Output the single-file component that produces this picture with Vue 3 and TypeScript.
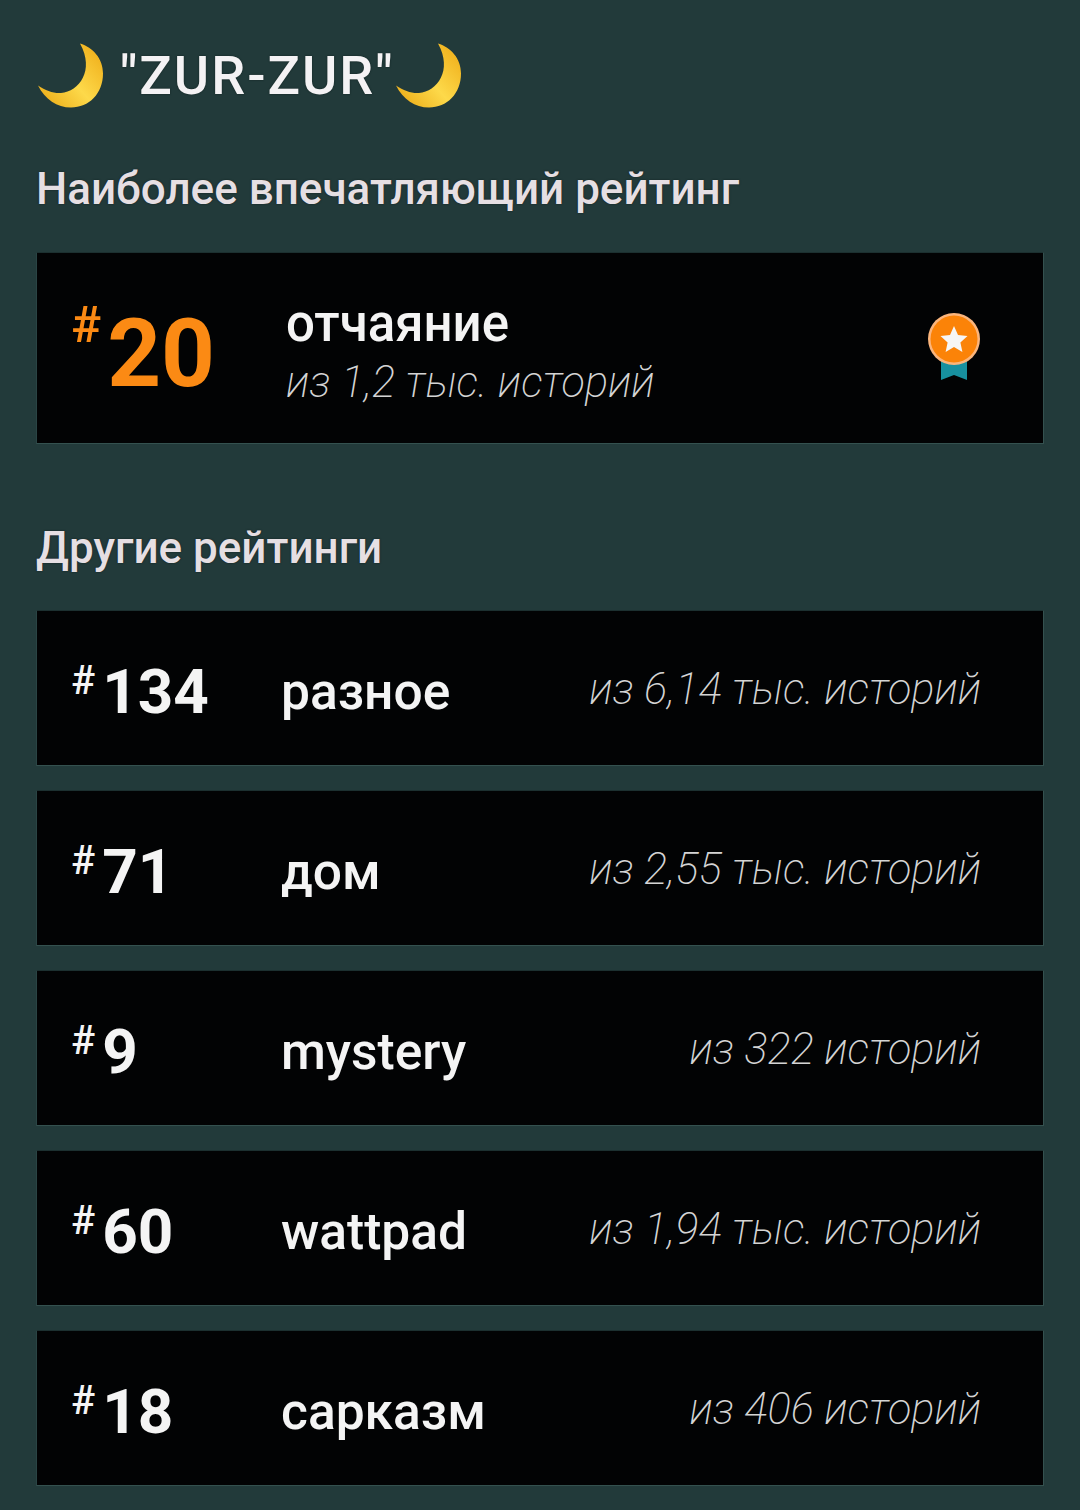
<template>
  <div class="page">
    <h1 class="title">
      <svg class="moon" viewBox="0 0 66 65"><use href="#moon-shape" /></svg>
      <span class="title-text">"ZUR-ZUR"</span>
      <svg class="moon moon-right" viewBox="0 0 66 65"><use href="#moon-shape" /></svg>
    </h1>

    <svg class="defs" width="0" height="0">
      <defs>
        <linearGradient id="moon-fill" x1="0.1" y1="0.9" x2="0.9" y2="0.2">
          <stop offset="0" stop-color="#eeb01c" />
          <stop offset="0.5" stop-color="#fdd94a" />
          <stop offset="1" stop-color="#f2b622" />
        </linearGradient>
        <path id="moon-shape" fill="url(#moon-fill)" d="M42 0 C55 4 65 15 65 30 C65 50 51 64 33 64 C19 64 7 56 0 42 C8 47 15 50 23 49.5 C41 48 57 27 42 0 Z" />
      </defs>
    </svg>

    <h2 class="heading">Наиболее впечатляющий рейтинг</h2>
    <div class="card card-top">
      <div class="rank rank-top"><span class="hash">#</span><span class="num">20</span></div>
      <div class="top-info">
        <div class="name">отчаяние</div>
        <div class="count">из 1,2 тыс. историй</div>
      </div>
      <svg class="medal" viewBox="0 0 54 68">
        <path d="M14 44 H40 V67 L27 62 L14 67 Z" fill="#17909f" />
        <circle cx="27" cy="26" r="26" fill="#fbb57c" />
        <circle cx="27" cy="26" r="23.5" fill="#fb8308" />
        <path d="M27 13 L31 22 L40.5 23 L33.4 29.5 L35.4 39 L27 34 L18.6 39 L20.6 29.5 L13.5 23 L23 22 Z" fill="#f6f6f6" />
      </svg>
    </div>

    <h2 class="heading heading-other">Другие рейтинги</h2>
    <div class="list">
      <div v-for="item in rankings" :key="item.name" class="card card-row">
        <div class="rank"><span class="hash">#</span><span class="num">{{ item.rank }}</span></div>
        <div class="name">{{ item.name }}</div>
        <div class="count">{{ item.count }}</div>
      </div>
    </div>
  </div>
</template>

<script setup lang="ts">
const rankings = [
  { rank: 134, name: "разное", count: "из 6,14 тыс. историй" },
  { rank: 71, name: "дом", count: "из 2,55 тыс. историй" },
  { rank: 9, name: "mystery", count: "из 322 историй" },
  { rank: 60, name: "wattpad", count: "из 1,94 тыс. историй" },
  { rank: 18, name: "сарказм", count: "из 406 историй" },
];
</script>

<style>
html,
body {
  background: #223a3a;
}
</style>

<style scoped>
.page {
  height: 1510px;
  box-sizing: border-box;
  padding: 41px 36px 0;
  background: #223a3a;
  font-family: Roboto, "Liberation Sans", sans-serif;
  overflow: hidden;
}

.title {
  display: flex;
  align-items: center;
  height: 68px;
  margin: 0;
  padding-left: 2px;
  font-size: 54px;
  font-weight: 500;
  letter-spacing: 2px;
  color: #f4f2f4;
  text-shadow: 0 0 2px #10201f;
}

.title-text {
  margin-left: 16px;
}

.moon {
  width: 66px;
  height: 66px;
  margin-top: 2px;
  flex-shrink: 0;
}

.moon-right {
  margin-left: 1px;
}

.defs {
  position: absolute;
}

.heading {
  margin: 54px 0 0;
  height: 52px;
  line-height: 52px;
  font-size: 44px;
  font-weight: 500;
  color: #e6dfe3;
  text-shadow: 0 0 2px #10201f;
}

.heading-other {
  margin-top: 78px;
}

.card {
  display: flex;
  align-items: center;
  box-sizing: border-box;
  width: 1008px;
  background: #020304;
  border: 1px solid #34514f;
  border-top-color: #1c3030;
  border-left-color: #2a4444;
  color: #f4f4f4;
}

.card-top {
  height: 192px;
  margin-top: 37px;
  padding: 0 62px 0 34px;
}

.card-row {
  height: 156px;
  padding: 0 62px 0 34px;
}

.list {
  display: flex;
  flex-direction: column;
  gap: 24px;
  margin-top: 36px;
}

.rank {
  display: flex;
  align-items: flex-start;
  width: 210px;
  flex-shrink: 0;
  font-weight: 700;
}

.hash {
  font-size: 40px;
  line-height: 40px;
  font-weight: 500;
  margin-top: 10px;
  margin-right: 7px;
}

.num {
  font-size: 62px;
  line-height: 66px;
  font-weight: 700;
  margin-top: 8px;
}

.rank-top {
  color: #fb8a14;
  width: 215px;
}

.rank-top .hash {
  font-size: 50px;
  line-height: 50px;
  margin-top: 4px;
  margin-right: 6px;
}

.rank-top .num {
  font-size: 94px;
  line-height: 92px;
  margin-top: 12px;
}

.name {
  font-size: 51.5px;
  font-weight: 500;
  line-height: 56px;
}

.card-row .name {
  margin-top: 8px;
}

.count {
  margin-left: auto;
  font-size: 43.4px;
  font-weight: 200;
  font-style: italic;
  color: #d4d4d4;
}

.card-row .count {
  margin-top: 2px;
}

.top-info {
  flex: 1;
  margin-top: 8px;
}

.top-info .name {
  font-size: 51px;
}

.top-info .count {
  margin-left: 0;
  margin-top: 5px;
}

.medal {
  width: 54px;
  height: 68px;
  margin-top: -2px;
  flex-shrink: 0;
}
</style>
